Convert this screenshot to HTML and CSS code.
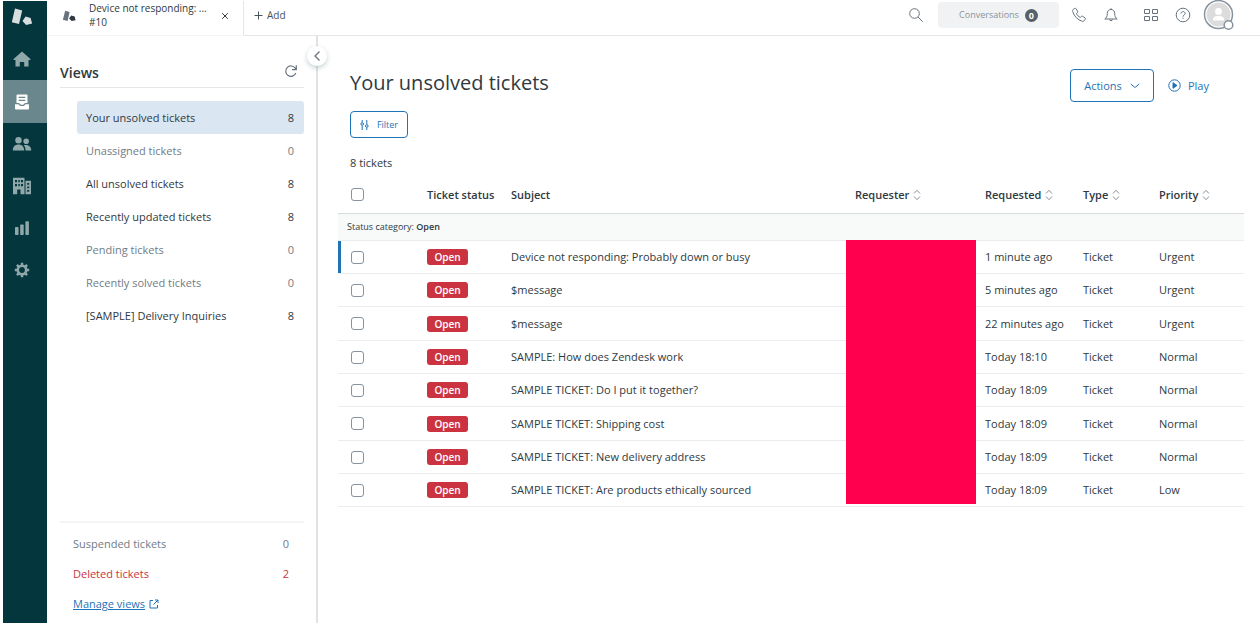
FILE: index.html
```html
<!DOCTYPE html>
<html lang="en">
<head>
    <meta charset="UTF-8">
    <meta name="viewport" content="width=device-width, initial-scale=1.0">
    <title>Your unsolved tickets</title>
    <link rel="stylesheet" href="styles.css">
</head>
<body>
    <div class="app">
        <!-- product rail -->
        <nav class="rail" aria-label="Main">
            <a class="rail-logo" href="#" aria-label="Start">
                <svg width="22" height="20" viewBox="0 0 22 20" fill="#d7dfe0">
                    <path d="M4 1.500l7.200 1.900-3.200 13.600L.8 15.200z"/>
                    <path d="M14.600 9.500l5 1.500 1.500 5.600-6 1.500-3.600-4.200z"/>
                </svg>
            </a>
            <a class="rail-item" href="#" aria-label="Home">
                <svg width="18" height="18" viewBox="0 0 18 18"><path d="M9 1.500l8.700 7.700-.7.900h-1.500V16.500h-4.300v-4.500H6.800v4.500H2.500v-6.400H1l-.7-.9z"/></svg>
            </a>
            <a class="rail-item active" href="#" aria-label="Views">
                <svg width="16" height="18" viewBox="0 0 16 18">
                    <path d="M3.500 1.500h9a1 1 0 0 1 1 1V10h-2.700c-.3 1.200-1.400 1.800-2.800 1.800S5.500 11.200 5.200 10H2.500V2.500a1 1 0 0 1 1-1zm1.200 2.200v1.300h6.600V3.700zm0 3v1.300h6.600V6.700z" fill-rule="evenodd"/>
                    <path d="M1 11.200h3.500c.7 1.200 1.900 1.900 3.500 1.900s2.800-.7 3.500-1.900H15v4.300a1 1 0 0 1-1 1H2a1 1 0 0 1-1-1z"/>
                </svg>
            </a>
            <a class="rail-item" href="#" aria-label="Customers">
                <svg width="20" height="18" viewBox="0 0 20 18">
                    <circle cx="6.500" cy="5.200" r="3.200"/>
                    <circle cx="14.200" cy="6.300" r="2.800"/>
                    <path d="M.8 15.500c0-3.900 2.300-6 5.700-6s5.700 2.100 5.700 6zM13.500 15.500c0-2.400-.6-4.100-1.800-5.200 4-1.300 7.600.9 7.600 5.200z"/>
                </svg>
            </a>
            <a class="rail-item" href="#" aria-label="Organizations">
                <svg width="20" height="18" viewBox="0 0 20 18" fill-rule="evenodd">
                    <path d="M1 .8h11.500v16.400H8.500v-4.700H5.200v4.700H1zM3 3v2.200h2V3zm3.300 0v2.200h1.500V3zM9 3v2.200h2V3zM3 7v2.200h2V7zm3.300 0v2.200h1.500V7zM9 7v2.200h2V7z"/>
                    <path d="M13.500 3.800H19v13.400h-5.500zM15.200 6v1.800h2V6zm0 3.500v1.800h2V9.500zm0 3.500v1.800h2V13z"/>
                </svg>
            </a>
            <a class="rail-item" href="#" aria-label="Reporting">
                <svg width="16" height="16" viewBox="0 0 16 16">
                    <rect x="1" y="7" width="3.500" height="8" rx=".8"/>
                    <rect x="6.200" y="4.500" width="3.500" height="10.500" rx=".8"/>
                    <rect x="11.400" y="1.200" width="3.500" height="13.800" rx=".8"/>
                </svg>
            </a>
            <a class="rail-item" href="#" aria-label="Admin">
                <svg width="16" height="16" viewBox="0 0 16 16">
                    <circle cx="8" cy="8" r="4.200" fill="none" stroke="currentColor" stroke-width="2.600"/>
                    <path d="M8 .8v2.500M8 12.700v2.500M.8 8h2.500M12.700 8h2.500M2.900 2.900l1.800 1.800M11.300 11.300l1.800 1.800M2.900 13.100l1.800-1.800M11.300 4.700l1.800-1.800" stroke="currentColor" stroke-width="2.400"/>
                </svg>
            </a>
        </nav>

        <div class="workspace">
            <header class="topbar">
                <div class="tab">
                    <svg class="tab-icon" width="14" height="12" viewBox="0 0 14 12">
                        <path d="M3.200.8l4.400 1.100-2 9L.9 9.800z" fill="#68737d"/>
                        <path d="M9.200 5.500l3.500 1 .8 3.700-3.900.9-2.500-2.600z" fill="#2f3941"/>
                    </svg>
                    <div class="tab-text">
                        <div class="tab-title">Device not responding: ...</div>
                        <div class="tab-id">#10</div>
                    </div>
                    <button class="tab-close" type="button" aria-label="Close tab">
                        <svg width="8" height="8" viewBox="0 0 8 8"><path d="M1.200 1.200l5.600 5.600M6.800 1.200L1.200 6.800"/></svg>
                    </button>
                </div>
                <button class="add-tab" type="button">
                    <svg width="9" height="9" viewBox="0 0 9 9"><path d="M4.500.5v8M.5 4.500h8"/></svg>
                    Add
                </button>
                <div class="tools">
                    <button class="tool" type="button" aria-label="Search">
                        <svg width="16" height="16" viewBox="0 0 16 16"><circle cx="6.500" cy="6.500" r="4.800"/><path d="M10 10l4.700 4.700"/></svg>
                    </button>
                    <button class="conversations" type="button">Conversations <span class="count">0</span></button>
                    <button class="tool tool-phone" type="button" aria-label="Talk">
                        <svg width="16" height="16" viewBox="0 0 16 16"><path d="M2.300 2.300l1.500-.9c.5-.2.900-.1 1.200.3l1.700 2.600c.3.500.2 1-.2 1.300l-1.100.8c.7 1.700 2.200 3.300 4 4.100l.9-1.100c.4-.4.800-.5 1.200-.2l2.600 1.700c.4.300.5.8.2 1.200l-1 1.500c-.4.700-1.200 1-2 .7C6.500 12.800 3.300 9.500 1.700 4.500c-.3-.9-.1-1.700.6-2.200z"/></svg>
                    </button>
                    <button class="tool tool-bell" type="button" aria-label="Notifications">
                        <svg width="16" height="16" viewBox="0 0 16 16"><path d="M8 1.200v1.300M8 2.500c-2.300 0-3.700 1.700-3.700 4 0 3-.8 4.200-2.500 5.500h12.400c-1.700-1.300-2.500-2.500-2.500-5.500 0-2.300-1.400-4-3.700-4zM6.500 12.300c0 1.900 3 1.900 3 0"/></svg>
                    </button>
                    <button class="tool tool-apps" type="button" aria-label="Products">
                        <svg width="16" height="16" viewBox="0 0 16 16"><path d="M1.500 2.500h5v4h-5zM9.500 2.500h5v4h-5zM1.500 9.500h5v4h-5zM9.500 9.500h5v4h-5z"/></svg>
                    </button>
                    <button class="tool" type="button" aria-label="Help">
                        <svg width="16" height="16" viewBox="0 0 16 16"><circle cx="8" cy="8" r="6.800"/><path d="M6 6.500c0-2.600 4.100-2.500 4.100 0 0 1.500-2.100 1.500-2.100 3.200M8 10.700v1.200"/></svg>
                    </button>
                    <button class="avatar" type="button" aria-label="Profile">
                        <svg width="32" height="32" viewBox="0 0 32 32" stroke-width="1.500">
                            <circle cx="15.500" cy="15.500" r="14" fill="#fff" stroke="#87929d"/>
                            <circle cx="15.500" cy="15.500" r="12" fill="#dcdcdd" stroke="none"/>
                            <circle cx="15.500" cy="12.500" r="3.400" fill="#fff" stroke="none"/>
                            <path d="M10 21.500v-1c0-2.800 2.700-3.500 5.500-3.500s5.500.7 5.500 3.500v1z" fill="#fff" stroke="none"/>
                            <circle cx="25.500" cy="26" r="4.300" fill="#fff" stroke="#87929d"/>
                        </svg>
                    </button>
                </div>
            </header>

            <div class="content">
                <aside class="views">
                    <div class="views-head">
                        <h2>Views</h2>
                        <button class="refresh" type="button" aria-label="Refresh views">
                            <svg width="14" height="14" viewBox="0 0 14 14"><path d="M11.800 9A5.200 5.200 0 1 1 11.200 4.200L12.200 5.500M12.300 1.200v4.500H7.900" stroke-width="1.200"/></svg>
                        </button>
                    </div>
                    <ul class="view-list">
                        <li><a class="view active" href="#"><span>Your unsolved tickets</span><span>8</span></a></li>
                        <li><a class="view empty" href="#"><span>Unassigned tickets</span><span>0</span></a></li>
                        <li><a class="view" href="#"><span>All unsolved tickets</span><span>8</span></a></li>
                        <li><a class="view" href="#"><span>Recently updated tickets</span><span>8</span></a></li>
                        <li><a class="view empty" href="#"><span>Pending tickets</span><span>0</span></a></li>
                        <li><a class="view empty" href="#"><span>Recently solved tickets</span><span>0</span></a></li>
                        <li><a class="view" href="#"><span>[SAMPLE] Delivery Inquiries</span><span>8</span></a></li>
                    </ul>
                    <div class="views-foot">
                        <a class="foot-row empty" href="#"><span>Suspended tickets</span><span>0</span></a>
                        <a class="foot-row danger" href="#"><span>Deleted tickets</span><span>2</span></a>
                        <a class="foot-row manage" href="#">
                            <span>Manage views</span>
                            <svg width="10" height="10" viewBox="0 0 10 10"><path d="M4 1.500H1v7.500h7.500V6M6 1h3v3M9 1L4.500 5.500"/></svg>
                        </a>
                    </div>
                    <button class="collapse" type="button" aria-label="Collapse views">
                        <svg width="8" height="12" viewBox="0 0 8 12"><path d="M6.500 1.500L2 6l4.500 4.500" stroke-width="1.300"/></svg>
                    </button>
                </aside>

                <main class="main">
                    <div class="main-head">
                        <h1>Your unsolved tickets</h1>
                        <div class="main-actions">
                            <button class="btn btn-actions" type="button">
                                Actions
                                <svg width="10" height="6" viewBox="0 0 10 6"><path d="M.8 1l3.500 3a1 1 0 0 0 1.400 0L9.200 1"/></svg>
                            </button>
                            <button class="play" type="button">
                                <svg width="13" height="13" viewBox="0 0 13 13"><circle cx="6.500" cy="6.500" r="5.700"/><path d="M5 3.700l4 2.800-4 2.800z" fill="currentColor"/></svg>
                                Play
                            </button>
                        </div>
                    </div>
                    <button class="btn btn-filter" type="button">
                        <svg width="9" height="10" viewBox="0 0 9 10"><path d="M2.200 0v2.500M2.200 5.500V10M6.800 0v4.500M6.800 7.500V10"/><circle cx="2.200" cy="4" r="1.300"/><circle cx="6.800" cy="6" r="1.300"/></svg>
                        Filter
                    </button>
                    <p class="total">8 tickets</p>

                    <table class="tickets">
                        <colgroup>
                            <col class="col-check">
                            <col class="col-status">
                            <col>
                            <col class="col-requester">
                            <col class="col-requested">
                            <col class="col-type">
                            <col class="col-priority">
                        </colgroup>
                        <thead>
                            <tr>
                                <th class="check"><input type="checkbox" aria-label="Select all tickets"></th>
                                <th>Ticket status</th>
                                <th>Subject</th>
                                <th><button class="sort" type="button">Requester <svg width="8" height="12" viewBox="0 0 8 12"><path d="M1 4.500L4 1.300l3 3.200M1 7.500l3 3.200 3-3.200"/></svg></button></th>
                                <th><button class="sort" type="button">Requested <svg width="8" height="12" viewBox="0 0 8 12"><path d="M1 4.500L4 1.300l3 3.200M1 7.500l3 3.200 3-3.200"/></svg></button></th>
                                <th><button class="sort" type="button">Type <svg width="8" height="12" viewBox="0 0 8 12"><path d="M1 4.500L4 1.300l3 3.200M1 7.500l3 3.200 3-3.200"/></svg></button></th>
                                <th><button class="sort" type="button">Priority <svg width="8" height="12" viewBox="0 0 8 12"><path d="M1 4.500L4 1.300l3 3.200M1 7.500l3 3.200 3-3.200"/></svg></button></th>
                            </tr>
                        </thead>
                        <tbody>
                            <tr class="group">
                                <td colspan="7">Status category: <b>Open</b></td>
                            </tr>
                        </tbody>
                        <tbody class="rows">
                            <tr class="current">
                                <td class="check"><input type="checkbox" aria-label="Select ticket"></td>
                                <td><span class="badge">Open</span></td>
                                <td>Device not responding: Probably down or busy</td>
                                <!-- requester names are hidden -->
                                <td class="requesters" rowspan="8"><div class="redacted"></div></td>
                                <td>1 minute ago</td>
                                <td>Ticket</td>
                                <td>Urgent</td>
                            </tr>
                            <tr>
                                <td class="check"><input type="checkbox" aria-label="Select ticket"></td>
                                <td><span class="badge">Open</span></td>
                                <td>$message</td>
                                <td>5 minutes ago</td>
                                <td>Ticket</td>
                                <td>Urgent</td>
                            </tr>
                            <tr>
                                <td class="check"><input type="checkbox" aria-label="Select ticket"></td>
                                <td><span class="badge">Open</span></td>
                                <td>$message</td>
                                <td>22 minutes ago</td>
                                <td>Ticket</td>
                                <td>Urgent</td>
                            </tr>
                            <tr>
                                <td class="check"><input type="checkbox" aria-label="Select ticket"></td>
                                <td><span class="badge">Open</span></td>
                                <td>SAMPLE: How does Zendesk work</td>
                                <td>Today 18:10</td>
                                <td>Ticket</td>
                                <td>Normal</td>
                            </tr>
                            <tr>
                                <td class="check"><input type="checkbox" aria-label="Select ticket"></td>
                                <td><span class="badge">Open</span></td>
                                <td>SAMPLE TICKET: Do I put it together?</td>
                                <td>Today 18:09</td>
                                <td>Ticket</td>
                                <td>Normal</td>
                            </tr>
                            <tr>
                                <td class="check"><input type="checkbox" aria-label="Select ticket"></td>
                                <td><span class="badge">Open</span></td>
                                <td>SAMPLE TICKET: Shipping cost</td>
                                <td>Today 18:09</td>
                                <td>Ticket</td>
                                <td>Normal</td>
                            </tr>
                            <tr>
                                <td class="check"><input type="checkbox" aria-label="Select ticket"></td>
                                <td><span class="badge">Open</span></td>
                                <td>SAMPLE TICKET: New delivery address</td>
                                <td>Today 18:09</td>
                                <td>Ticket</td>
                                <td>Normal</td>
                            </tr>
                            <tr>
                                <td class="check"><input type="checkbox" aria-label="Select ticket"></td>
                                <td><span class="badge">Open</span></td>
                                <td>SAMPLE TICKET: Are products ethically sourced</td>
                                <td>Today 18:09</td>
                                <td>Ticket</td>
                                <td>Low</td>
                            </tr>
                        </tbody>
                    </table>
                </main>
            </div>
        </div>
    </div>
</body>
</html>
```
FILE: styles.css
```css
*{
    margin: 0;
    padding: 0;
    box-sizing: border-box;
}
body{
    font-family: "Open Sans", "Noto Sans", sans-serif;
    font-size: 11px;
    line-height: 16px;
    color: #2f3941;
    background: #fff;
}
button{
    font: inherit;
    color: inherit;
    background: none;
    border: none;
    cursor: pointer;
}
a{
    color: inherit;
    text-decoration: none;
}
svg{
    display: block;
    flex: none;
}
button svg,
.manage svg{
    fill: none;
    stroke: currentColor;
}
.app{
    display: flex;
    min-height: 100vh;
    padding: 1px 0 3px 3px;
}
/* left rail */
.rail{
    flex: none;
    width: 44px;
    background: #03363d;
}
.rail-logo,
.rail-item{
    display: flex;
    align-items: center;
    justify-content: center;
    height: 42px;
    padding-right: 6px;
    color: #91a8ab;
}
.rail-logo{
    height: 37px;
    padding-bottom: 5px;
}
.rail-item svg{
    fill: currentColor;
}
.rail-item.active{
    height: 43px;
    background: #69878c;
    color: #fff;
}
.workspace{
    flex: 1;
    min-width: 0;
    display: flex;
    flex-direction: column;
}
/* top bar */
.topbar{
    display: flex;
    height: 35px;
}
.tab{
    display: flex;
    width: 197px;
    padding: 0 14px 0 15px;
    border-right: 1px solid #e4e7e8;
    border-bottom: 1px solid #f3f4f5;
}
.tab-icon{
    margin: 9px 13px 0 0;
}
.tab-text{
    flex: 1;
    font-size: 10px;
    line-height: 14px;
    white-space: nowrap;
}
.tab-title{
    font-weight: 500;
}
.tab-close{
    height: 30px;
}
.add-tab{
    display: flex;
    align-items: center;
    gap: 4px;
    padding: 0 10px 6px;
    font-size: 10px;
    color: #49545c;
    border-bottom: 1px solid #e4e7e8;
}
.tools{
    flex: 1;
    display: flex;
    align-items: center;
    justify-content: flex-end;
    padding: 0 25px 6px 0;
    border-bottom: 1px solid #e4e7e8;
    color: #68737d;
}
.tool{
    width: 16px;
    height: 16px;
}
.conversations{
    display: flex;
    align-items: center;
    justify-content: center;
    gap: 6px;
    width: 121px;
    height: 26px;
    margin: 0 12px 0 14px;
    font-size: 9px;
    color: #87929d;
    background: #f1f2f3;
    border-radius: 4px;
}
.count{
    width: 13px;
    height: 13px;
    line-height: 13px;
    font-weight: 700;
    color: #fff;
    background: #56616a;
    border-radius: 50%;
}
.tool-phone{
    margin-right: 16px;
}
.tool-bell{
    margin-right: 24px;
}
.tool-apps{
    margin-right: 16px;
}
.avatar{
    width: 32px;
    height: 32px;
    margin-left: 12px;
}
.content{
    flex: 1;
    display: flex;
}
/* views sidebar */
.views{
    position: relative;
    flex: none;
    display: flex;
    flex-direction: column;
    width: 271px;
    padding: 24px 12px 4px 13px;
    border-right: 2px solid #dfe3e5;
}
.views-head{
    display: flex;
    justify-content: space-between;
    height: 28px;
    padding-right: 6px;
    border-bottom: 1px solid #e4e7e8;
}
.views-head h2{
    font-size: 14px;
    font-weight: 600;
    line-height: 26px;
}
.refresh{
    height: 22px;
    color: #68737d;
}
.view-list{
    list-style: none;
    margin: 13px 0 0 17px;
}
.view{
    display: flex;
    justify-content: space-between;
    padding: 0 10px 0 9px;
    line-height: 33px;
    border-radius: 3px;
}
.view.active{
    background: #dae7f3;
}
.empty{
    color: #717c85;
}
.views-foot{
    margin-top: auto;
    padding: 6px 15px 0 13px;
    border-top: 2px solid #f3f4f5;
}
.foot-row{
    display: flex;
    justify-content: space-between;
    line-height: 30px;
}
.danger{
    color: #cc3340;
}
.manage{
    justify-content: flex-start;
    align-items: center;
    gap: 4px;
    color: #1f73b7;
}
.manage span{
    text-decoration: underline;
}
.collapse{
    position: absolute;
    top: 10px;
    right: -11px;
    display: flex;
    align-items: center;
    justify-content: center;
    width: 20px;
    height: 20px;
    color: #68737d;
    background: #fff;
    border-radius: 50%;
    box-shadow: 0 2px 5px rgba(23, 73, 77, 0.25);
}
/* ticket list */
.main{
    flex: 1;
    min-width: 0;
    padding: 33px 16px 0 20px;
}
.main-head{
    display: flex;
    justify-content: space-between;
    height: 42px;
    padding: 0 35px 0 12px;
}
h1{
    font-size: 20px;
    font-weight: 400;
    line-height: 28px;
}
.main-actions{
    display: flex;
    gap: 14px;
    height: 33px;
    color: #1f73b7;
}
.btn{
    display: flex;
    align-items: center;
    justify-content: center;
    gap: 8px;
    color: #1f73b7;
    border: 1px solid #1f73b7;
    border-radius: 4px;
}
.btn-actions{
    width: 84px;
}
.play{
    display: flex;
    align-items: center;
    gap: 7px;
}
.btn-filter{
    width: 58px;
    height: 27px;
    margin-left: 12px;
    font-size: 9px;
}
.total{
    margin: 17px 0 0 12px;
}
.tickets{
    width: 100%;
    margin-top: 5px;
    table-layout: fixed;
    border-collapse: separate;
    border-spacing: 0;
}
.col-check{
    width: 80px;
}
.col-status{
    width: 84px;
}
.col-requester{
    width: 130px;
}
.col-requested{
    width: 98px;
}
.col-type{
    width: 76px;
}
.col-priority{
    width: 94px;
}
.tickets th{
    height: 38px;
    padding-left: 9px;
    text-align: left;
    font-weight: 600;
    border-bottom: 1px solid #d8dcde;
}
.sort{
    display: flex;
    align-items: center;
    gap: 4px;
}
.sort svg{
    color: #87929d;
}
.tickets td{
    height: 33px;
    padding-left: 9px;
    white-space: nowrap;
    border-bottom: 1px solid #ebedee;
}
/* keeps the average row a bit over 33px */
.rows tr:nth-child(3n) td{
    height: 34px;
}
.tickets .group td{
    height: 27px;
    font-size: 9px;
    background: #f8f9f9;
}
.group b{
    font-weight: 600;
}
.tickets .check{
    padding-left: 13px;
}
.current .check{
    box-shadow: inset 3px 0 #1f73b7;
}
.check input{
    display: block;
    appearance: none;
    width: 13px;
    height: 13px;
    background: #fff;
    border: 1px solid #87929d;
    border-radius: 3px;
}
.badge{
    display: block;
    width: 41px;
    font-size: 10px;
    font-weight: 600;
    text-align: center;
    color: #fff;
    background: #cc3340;
    border-radius: 3px;
}
.requesters{
    position: relative;
}
.redacted{
    position: absolute;
    top: -1px;
    left: 0;
    right: 0;
    bottom: 2px;
    background: #ff004f;
}
```
